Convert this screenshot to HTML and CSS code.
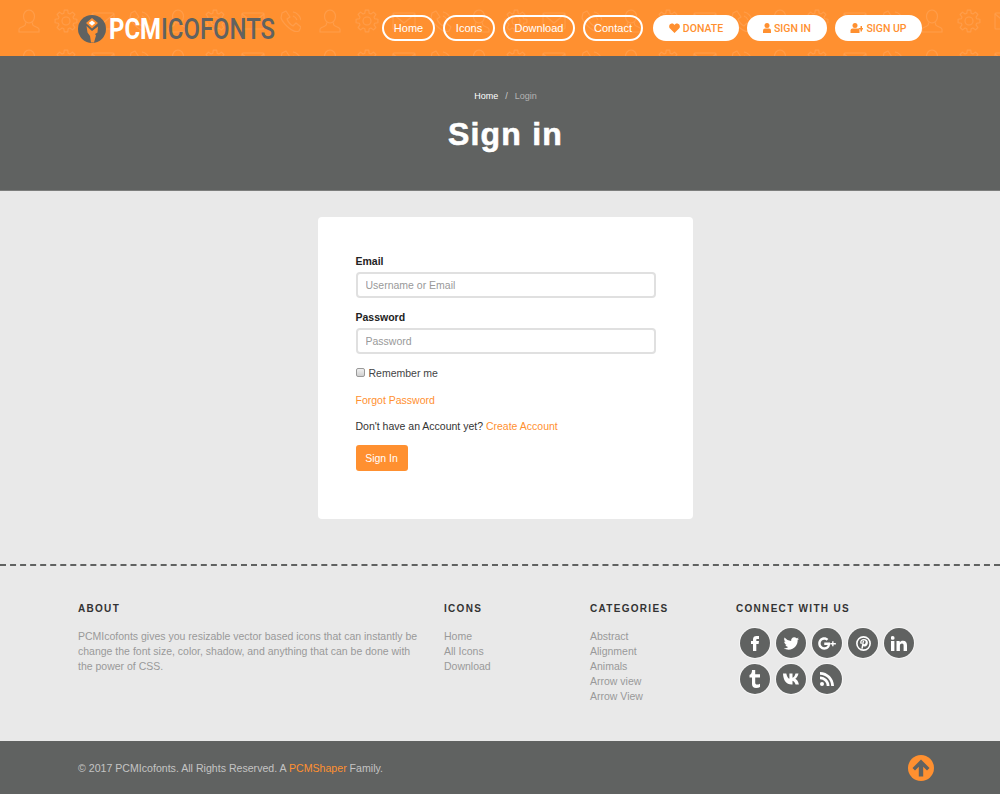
FILE: index.html
```html
<!DOCTYPE html>
<html lang="en">
<head>
  <meta charset="UTF-8">
  <title>Sign in - PCMIcofonts</title>
  <link rel="stylesheet" href="styles.css">
</head>
<body>
  <header class="topbar">
    <svg class="topbar-bg" width="1000" height="56">
      <defs>
        <g id="bg-user" fill="none" stroke="#ff9d4a" stroke-width="1.1" stroke-linejoin="round">
          <ellipse cx="0" cy="-4.500" rx="5.500" ry="6.500"/>
          <path d="M-3.500 1.500v1.500q0 1.500-2 2.200-4.500 1.600-4.500 3.300v2.500h20v-2.500q0-1.700-4.500-3.300-2-.7-2-2.200v-1.500"/>
        </g>
        <g id="bg-gear" fill="none" stroke="#ff9d4a" stroke-width="1.1" stroke-linejoin="round">
          <circle cx="0" cy="0" r="4"/>
          <path d="M-1.700-10.900L1.700-10.900 2.200-7.700 3.900-7 6.500-8.900 8.900-6.500 7-3.900 7.700-2.200 10.900-1.700 10.900 1.700 7.700 2.200 7 3.900 8.900 6.500 6.500 8.900 3.900 7 2.200 7.700 1.700 10.900-1.700 10.900-2.200 7.700-3.900 7-6.500 8.900-8.900 6.500-7 3.900-7.700 2.200-10.900 1.700-10.900-1.700-7.700-2.200-7-3.900-8.900-6.500-6.500-8.900-3.900-7-2.200-7.700z"/>
        </g>
        <g id="bg-mail" fill="none" stroke="#ff9d4a" stroke-width="1.1">
          <rect x="-11" y="-8" width="22" height="16" rx="1"/>
          <path d="M-11-7l11 9 11-9"/>
        </g>
        <g id="bg-phone" fill="none" stroke="#ff9d4a" stroke-width="1.1" stroke-linejoin="round">
          <path d="M-9-8l4-2 4 6-3 2q2 5 6 7l3-3 5 4-2 4q-4 2-10-3t-8-10z"/>
          <path d="M2-9q6 1 8 8M2-5q3 1 4 4"/>
        </g>
        <pattern id="bg-icons" width="301" height="40" patternUnits="userSpaceOnUse" x="0" y="0">
          <use href="#bg-user" x="29" y="21"/>
          <use href="#bg-gear" x="66" y="21"/>
          <use href="#bg-mail" x="103" y="21"/>
          <use href="#bg-phone" x="140" y="21"/>
          <use href="#bg-user" x="178" y="21"/>
          <use href="#bg-gear" x="215" y="21"/>
          <use href="#bg-mail" x="253" y="21"/>
          <use href="#bg-phone" x="291" y="21"/>
        </pattern>
      </defs>
      <rect width="1000" height="56" fill="url(#bg-icons)"/>
    </svg>
    <a class="logo" href="#">
      <svg class="logo-mark" width="28" height="28" viewBox="0 0 28 28">
        <circle cx="14" cy="14" r="14" fill="#606261"/>
        <path d="M14 3l6 5-6 5.500-6-5.500z" fill="#ff9030"/>
        <path d="M14 5.500l3.200 2.600-3.200 2.700-3.200-2.700z" fill="#fff"/>
        <path d="M8.500 11l5.500 5 6-4.500-.5 6-2.500 1.500 1 1.500-2 7h-3l-1-6.500-2.500-3.500z" fill="#ff9030"/>
      </svg>
      <span class="logo-text"><b>PCM</b>ICOFONTS</span>
    </a>
    <nav class="topnav">
      <a class="pill" href="#">Home</a>
      <a class="pill" href="#">Icons</a>
      <a class="pill" href="#">Download</a>
      <a class="pill" href="#">Contact</a>
      <a class="pill pill-white pill-donate" href="#">
        <svg width="11" height="10" viewBox="0 0 22 20"><path d="M11 20L2 11C-1 8 0 2 5 1c3-.5 5 1 6 3 1-2 3-3.500 6-3 5 1 6 7 3 10z" fill="#ff9030"/></svg>
        DONATE
      </a>
      <a class="pill pill-white" href="#">
        <svg width="8" height="10" viewBox="0 0 16 20"><circle cx="8" cy="5" r="5" fill="#ff9030"/><path d="M0 20v-5q0-4 4-4h8q4 0 4 4v5z" fill="#ff9030"/></svg>
        SIGN IN
      </a>
      <a class="pill pill-white" href="#">
        <svg width="13" height="10" viewBox="0 0 26 20"><circle cx="10" cy="5" r="5" fill="#ff9030"/><path d="M1 20v-5q0-4 4-4h10q4 0 4 4v5z" fill="#ff9030"/><path d="M21 6v4h-4v3h4v4h3v-4h2v-3h-2V6z" fill="#ff9030"/></svg>
        SIGN UP
      </a>
    </nav>
  </header>

  <section class="hero">
    <div class="crumbs"><a href="#">Home</a><span class="crumb-sep">/</span><span class="crumb-now">Login</span></div>
    <h1 class="hero-title">Sign in</h1>
  </section>

  <main class="page">
    <form class="card">
      <label class="field-label" for="email">Email</label>
      <input class="field" id="email" type="text" placeholder="Username or Email">
      <label class="field-label" for="password">Password</label>
      <input class="field" id="password" type="password" placeholder="Password">
      <label class="remember"><input type="checkbox"> Remember me</label>
      <p class="line"><a href="#">Forgot Password</a></p>
      <p class="line">Don't have an Account yet? <a href="#">Create Account</a></p>
      <button class="btn" type="button">Sign In</button>
    </form>
  </main>

  <footer class="footer">
    <div class="footer-cols">
      <div>
        <h4 class="footer-head">ABOUT</h4>
        <p class="about">PCMIcofonts gives you resizable vector based icons that can instantly be change the font size, color, shadow, and anything that can be done with the power of CSS.</p>
      </div>
      <div>
        <h4 class="footer-head">ICONS</h4>
        <ul class="links">
          <li><a href="#">Home</a></li>
          <li><a href="#">All Icons</a></li>
          <li><a href="#">Download</a></li>
        </ul>
      </div>
      <div>
        <h4 class="footer-head">CATEGORIES</h4>
        <ul class="links">
          <li><a href="#">Abstract</a></li>
          <li><a href="#">Alignment</a></li>
          <li><a href="#">Animals</a></li>
          <li><a href="#">Arrow view</a></li>
          <li><a href="#">Arrow View</a></li>
        </ul>
      </div>
      <div>
        <h4 class="footer-head">CONNECT WITH US</h4>
        <div class="socials">
          <a class="social" href="#"><svg width="16" height="16" viewBox="0 0 16 16"><path d="M6 16V9H4V6h2V4.500C6 2 7.300 1 9.500 1H12v3h-1.500C9.500 4 9.300 4.400 9.300 5v1H12l-.4 3H9.300v7z"/></svg></a>
          <a class="social" href="#"><svg width="16" height="14" viewBox="0 0 18 16"><path d="M18 3c-.6.3-1.300.5-2 .6.700-.5 1.300-1.200 1.600-2-.7.4-1.500.7-2.300.9C14.600 1.700 13.700 1.300 12.700 1.300c-2.300 0-4 2.100-3.500 4.400C6.200 5.500 3.500 4.100 1.700 1.800.7 3.400 1.200 5.600 2.800 6.700c-.6 0-1.100-.2-1.600-.4 0 1.700 1.200 3.200 2.900 3.600-.5.100-1 .2-1.600.1.400 1.400 1.800 2.500 3.400 2.500-1.500 1.200-3.400 1.700-5.300 1.500 1.600 1 3.500 1.600 5.600 1.600 6.900 0 10.700-5.800 10.400-11 .7-.5 1.300-1.100 1.400-1.600z"/></svg></a>
          <a class="social" href="#"><svg width="19" height="13" viewBox="0 0 20 14"><path d="M6.500 6v2.500h3.700C10 9.700 8.900 11 6.500 11 4.300 11 2.600 9.200 2.600 7s1.700-4 3.900-4c1.200 0 2 .5 2.500 1L10.900 2.100C9.700 1 8.200.4 6.500.4 2.900.4 0 3.300 0 7s2.900 6.600 6.500 6.600c3.800 0 6.300-2.600 6.300-6.400 0-.4 0-.8-.1-1.200z"/><path d="M16.500 4.500h-1.500v2h-2v1.500h2v2h1.500V8H19V6.500h-2.500z"/></svg></a>
          <a class="social" href="#"><svg width="15" height="15" viewBox="0 0 14 14"><circle cx="7" cy="7" r="6.200" fill="none" stroke="#fff" stroke-width="1.500"/><path d="M7.400 2.800C5.200 2.800 3.900 4.200 3.900 5.800c0 .9.400 1.600 1.100 1.900l.5-1.100c-.3-.3-.4-.6-.4-.9 0-1 .8-1.800 2.100-1.800 1.100 0 1.800.7 1.800 1.700 0 1.200-.6 2.100-1.400 2.100-.4 0-.7-.3-.6-.7l.7-2.600H6.300L4.900 12h1.300l.7-2.700c.3.300.8.500 1.200.5 1.800 0 3-1.600 3-3.700 0-2-1.500-3.300-3.700-3.300z"/></svg></a>
          <a class="social" href="#"><svg width="16" height="15" viewBox="0 0 16 15"><rect x="0" y="5" width="3.400" height="10"/><circle cx="1.700" cy="1.900" r="1.900"/><path d="M5.500 5h3.200v1.400C9.300 5.400 10.400 4.700 12 4.700c2.800 0 4 1.700 4 4.600V15h-3.400V9.800c0-1.300-.4-2.200-1.600-2.200S8.900 8.500 8.900 9.800V15H5.500z"/></svg></a>
          <a class="social" href="#"><svg width="12" height="18" viewBox="0 0 12 18"><path d="M3 0h3.200v4.300H11v3.300H6.200v5c0 1.500.7 2 1.800 2 1 0 2-.3 3-.9V17c-1 .6-2.300 1-3.900 1C4.500 18 3 16.600 3 14V7.600H.5V5C2.300 4.400 3 2.400 3 0z"/></svg></a>
          <a class="social" href="#"><svg width="20" height="12" viewBox="0 0 20 12"><path d="M0 .5h3.300c.4 2.500 1.800 5 3.100 5.300V.5h3.100v4.300c1.200-.2 2.500-2 3-4.300h3c-.5 2.600-2 4.500-3.200 5.200 1.300.7 3 2.300 3.600 5.800h-3.300c-.6-2-1.700-3.500-3.100-3.800v3.800h-.8C3 11.500.3 7.300 0 .5z" transform="translate(2 0)"/></svg></a>
          <a class="social" href="#"><svg width="14" height="14" viewBox="0 0 14 14"><circle cx="2" cy="12" r="2"/><path d="M0 4.500v2.800c3.700 0 6.700 3 6.700 6.700h2.800C9.500 8.800 5.200 4.500 0 4.500z"/><path d="M0 0v2.800C6.200 2.800 11.200 7.800 11.200 14H14C14 6.300 7.700 0 0 0z"/></svg></a>
        </div>
      </div>
    </div>
    <div class="copybar">
      <p class="copy">© 2017 PCMIcofonts. All Rights Reserved. A <a href="#">PCMShaper</a> Family.</p>
      <a class="to-top" href="#">
        <svg width="26" height="26" viewBox="0 0 26 26"><circle cx="13" cy="13" r="13" fill="#ff9030"/><path d="M13 4.500l8.500 8.500-2.500 2.500-3.800-3.800V21.500h-4.400v-9.800L7 15.500 4.500 13z" fill="#606261"/></svg>
      </a>
    </div>
  </footer>
</body>
</html>
```

FILE: styles.css
```css
* {
  box-sizing: border-box;
}
body {
  margin: 0;
  font-family: "Liberation Sans", Arial, sans-serif;
  font-size: 12px;
  color: #333;
  background: #e9e9e9;
}
a {
  text-decoration: none;
}

/* top bar */
.topbar {
  position: relative;
  height: 56px;
  display: flex;
  align-items: center;
  justify-content: space-between;
  padding: 0 78px;
  background: #ff9030;
}
.topbar-bg {
  position: absolute;
  left: 0;
  top: 0;
}
.logo {
  position: relative;
  display: flex;
  align-items: center;
  gap: 3px;
  margin-top: 2px;
}
.logo-text {
  font-family: "Roboto", sans-serif;
  font-size: 29px;
  font-weight: 500;
  color: #606261;
  transform: scaleX(0.825);
  transform-origin: left center;
}
.logo-text b {
  font-weight: 700;
  color: #fff;
}
.topnav {
  position: relative;
  display: grid;
  grid-template-columns: 53px 52px 72px 60px 88px 80px 87px;
  gap: 8px;
}
.pill {
  height: 26px;
  display: flex;
  align-items: center;
  justify-content: center;
  gap: 3px;
  border: 2px solid #fff;
  border-radius: 13px;
  color: #fff;
  font-size: 11px;
}
.pill-white {
  background: #fff;
  color: #ff9030;
  font-family: "Roboto", sans-serif;
  font-size: 10.500px;
  font-weight: 500;
}
.pill-donate {
  margin-left: 2px;
}

/* page title */
.hero {
  height: 135px;
  padding: 34px 0 0 11px;
  text-align: center;
  background: #606261;
  border-bottom: 1px solid #7d7e7d;
  color: #fff;
}
.crumbs {
  font-size: 9px;
  line-height: 12px;
}
.crumbs a {
  color: #fff;
}
.crumb-sep {
  margin: 0 7px;
  color: #ccc;
}
.crumb-now {
  color: #b4b4b4;
}
.hero-title {
  margin: 12px 0 0;
  font-size: 32px;
  line-height: 40px;
  font-weight: 700;
  letter-spacing: 1.200px;
  -webkit-text-stroke: 0.6px #fff;
}

/* login card */
.page {
  height: 375px;
  padding: 26px 0 0 11px;
  border-bottom: 2px dashed #606261;
}
.card {
  width: 375px;
  height: 302px;
  margin: 0 auto;
  padding: 37px 37px 0 37.500px;
  background: #fff;
  border-radius: 4px;
}
.field-label {
  display: block;
  font-weight: 700;
  font-size: 10.500px;
  line-height: 14px;
  color: #222;
  margin-bottom: 4px;
}
.field {
  display: block;
  width: 300px;
  height: 26px;
  padding: 0 8px;
  margin-bottom: 12px;
  border: 2px solid #e0e0e0;
  border-radius: 4px;
  font-family: inherit;
  font-size: 10.500px;
  color: #333;
}
.field::placeholder {
  color: #999;
}
.remember {
  display: flex;
  align-items: center;
  gap: 4px;
  margin-bottom: 13px;
  font-size: 10.500px;
  line-height: 14px;
  color: #444;
}
.remember input {
  appearance: none;
  margin: 0 0 2px;
  width: 9px;
  height: 9px;
  border: 1px solid #999;
  border-radius: 2px;
  background: linear-gradient(#f0f0f0, #d0d0d0);
}
.line {
  margin: 12px 0 0;
  font-size: 10.500px;
  line-height: 14px;
}
.line a {
  color: #ff9030;
}
.btn {
  display: block;
  width: 52px;
  height: 26px;
  margin-top: 12px;
  padding: 0;
  border: 0;
  border-radius: 3px;
  background: #ff9030;
  color: #fff;
  font-family: inherit;
  font-size: 10.500px;
}

/* footer */
.footer-cols {
  display: grid;
  grid-template-columns: 366px 146px 146px 1fr;
  height: 175px;
  padding: 36px 0 0 78px;
}
.footer-head {
  margin: 0 0 13px;
  font-size: 10px;
  line-height: 14px;
  font-weight: 700;
  letter-spacing: 1.300px;
  color: #333;
}
.about {
  margin: 0;
  width: 345px;
  font-size: 10.500px;
  line-height: 15px;
  color: #999;
}
.links {
  margin: 0;
  padding: 0;
  list-style: none;
  font-size: 10.500px;
  line-height: 15px;
}
.links a {
  color: #999;
}
.socials {
  display: flex;
  flex-wrap: wrap;
  gap: 6px;
  width: 190px;
  padding-left: 4px;
  margin-top: -1px;
}
.social {
  width: 30px;
  height: 30px;
  display: flex;
  align-items: center;
  justify-content: center;
  border-radius: 50%;
  background: #606261;
  box-shadow: 0 0 0 1px #f5f5f5;
}
.social svg {
  fill: #fff;
}
.copybar {
  height: 53px;
  display: flex;
  align-items: center;
  justify-content: space-between;
  padding: 0 66px 0 78px;
  background: #606261;
}
.copy {
  margin: 0;
  font-size: 10.600px;
  color: #c4c4c4;
}
.copy a {
  color: #ff9030;
}
.to-top {
  display: flex;
}
```
